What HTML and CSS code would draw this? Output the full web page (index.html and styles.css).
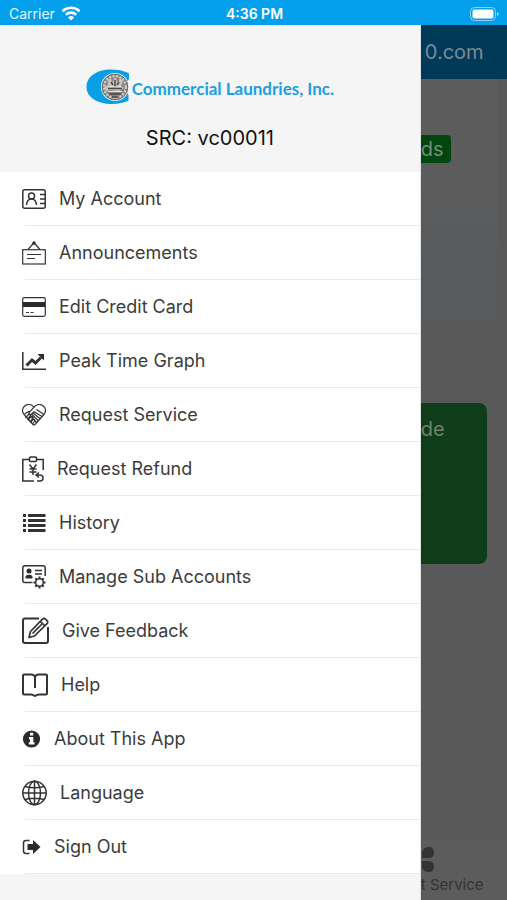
FILE: index.html
```html
<!DOCTYPE html>
<html lang="en">
<head>
    <meta charset="UTF-8">
    <meta name="viewport" content="width=device-width, initial-scale=1.0">
    <title>Commercial Laundries, Inc.</title>
    <link rel="stylesheet" href="styles.css">
</head>
<body>
    <div class="status-bar">
        <div class="carrier">
            <span>Carrier</span>
            <svg width="20" height="15" viewBox="0 0 20 15" fill="none" stroke="#fff" stroke-width="2.6">
                <path d="M1.5 5.2a12.3 12.3 0 0 1 17 0"/>
                <path d="M4.8 8.7a7.6 7.6 0 0 1 10.4 0"/>
                <path d="M10 14.6l-3-3.2a4.4 4.4 0 0 1 6 0z" fill="#fff" stroke="none"/>
            </svg>
        </div>
        <time>4:36 PM</time>
        <svg class="battery" width="30" height="14" viewBox="0 0 30 14">
            <rect x="0.5" y="0.5" width="25" height="13" rx="4" fill="none" stroke="#8fd2f6"/>
            <rect x="2.5" y="2.5" width="21" height="9" rx="2" fill="#fff"/>
            <path d="M27 5c2.4.6 2.4 3.4 0 4z" fill="#8fd2f6"/>
        </svg>
    </div>

    <div class="screen">
        <nav class="drawer">
            <header class="drawer-header">
                <div class="logo">
                    <svg width="44" height="36" viewBox="0 0 44 36">
                        <path d="M43 4.2C37 1.5 31 .5 25 .5 10 .5.5 8 .5 18S11 35 26 35c7 0 12-1.3 16.5-3.5V26L38 18l5-8z" fill="#079fe6"/>
                        <circle cx="29" cy="18" r="14" fill="#f5f5f5"/>
                        <circle cx="29" cy="18" r="13" fill="#8b8583"/>
                        <circle cx="29" cy="18" r="11" fill="none" stroke="#d2cecc" stroke-width="2.5" stroke-dasharray="2 1.5"/>
                        <circle cx="29" cy="18" r="12.8" fill="none" stroke="#6e6867"/>
                        <path d="M22 11l3-2 1 5 3-6 3 6 2-5 3 3-2 5 3 2-5 3-9-1-4 1-2-4 4-2z" fill="#c9c5c3"/>
                        <path d="M22 19.5h14M25 13l2 3M33 13l-2 3M29 11v6M23 25h12M26 28h6" fill="none" stroke="#4b4645" stroke-width="1.5"/>
                        <path d="M22 22.5h14M24 17.5h3M31 17.5h4" stroke="#e6e3e1"/>
                    </svg>
                    <span>Commercial Laundries, Inc.</span>
                </div>
                <p class="src">SRC: vc00011</p>
            </header>

            <ul class="menu">
                <li><a href="#account">
                    <svg width="24" height="20" viewBox="0 0 24 20">
                        <rect x="0.8" y="0.8" width="22.4" height="18.4" rx="2"/>
                        <circle cx="9.5" cy="7" r="3"/>
                        <path d="M4.5 16c.3-3.700 1.800-6 5-6s4.700 2.300 5 6M18 5.500h5.500M18 10h5.500M18 14.500h5.500"/>
                    </svg>
                    <span>My Account</span>
                </a></li>
                <li><a href="#announcements">
                    <svg class="thin" width="24" height="24" viewBox="0 0 24 24">
                        <rect x="0.7" y="8.7" width="22.6" height="14.3"/>
                        <path d="M6 8.5l5.3-6M18 8.500l-5.300-6M5 13.500h14M5 17.500h8M16 13.500h3"/>
                        <circle class="solid" cx="12" cy="2" r="1.7"/>
                    </svg>
                    <span>Announcements</span>
                </a></li>
                <li><a href="#card">
                    <svg class="thin" width="24" height="20" viewBox="0 0 24 20">
                        <rect x="0.7" y="0.7" width="22.6" height="18.6" rx="1.5"/>
                        <path class="solid" d="M1 5h22v5H1z"/>
                        <path d="M4 15.5h3M8.500 15.500h3"/>
                    </svg>
                    <span>Edit Credit Card</span>
                </a></li>
                <li><a href="#graph">
                    <svg width="24" height="18" viewBox="0 0 24 18">
                        <path d="M0.8 0v17.2H24"/>
                        <path d="M4.5 13.5l5.500-5.500 3.500 3L19 5.500" stroke-width="3"/>
                        <path class="solid" d="M15.5 2H22v6.500z"/>
                    </svg>
                    <span>Peak Time Graph</span>
                </a></li>
                <li><a href="#service">
                    <svg class="thin" width="24" height="22" viewBox="0 0 24 22">
                        <path d="M12 3.2C9.5-.2 5-.2 2.5 2.2 0 5 .2 8.5 2.5 11l8.500 9.500q1 1 2 0l8.500-9.500c2.300-2.500 2.500-6 0-8.800C19-.2 14.500-.2 12 3.200z"/>
                        <path d="M12 3.200L7.200 8.500c-.8 2 1.200 2.800 2.500 1.500L12 7.800l8.500 5M14.500 5.500l7.500 5M2.500 10l5-3M11 9l7.500 6M10 10.500l6.500 6.500M9 12.500l5.500 6"/>
                        <path d="M3.500 14l3-3.500c1.500-1 2.500.5 1.500 1.700l-2.500 3.500M6 16.500l3-4c1.500-.8 2.600.5 1.600 1.800L8 18M8.500 19l2.500-3.500c1.500-.5 2.200.8 1.400 2L10.500 20"/>
                    </svg>
                    <span>Request Service</span>
                </a></li>
                <li><a href="#refund">
                    <svg width="22" height="26" viewBox="0 0 22 26">
                        <path d="M7 3.500H.8V25H12M15 3.500h6.200V14"/>
                        <rect x="7.5" y="1" width="7" height="4.500" rx="1"/>
                        <path d="M7.500 8.500L11 13l3.500-4.500M11 13v6M7.500 13h7M7.500 16h7"/>
                        <path d="M17 16.500L14 19l3 2.500M14 19h4c4 0 4 6 0 6h-3"/>
                    </svg>
                    <span>Request Refund</span>
                </a></li>
                <li><a href="#history">
                    <svg width="24" height="20" viewBox="0 0 24 20">
                        <path d="M1 2.500h3M1 7.500h3M1 12.500h3M1 17.500h3M6 2.500h17.500M6 7.500h17.500M6 12.500h17.500M6 17.500h17.500" stroke-width="3"/>
                    </svg>
                    <span>History</span>
                </a></li>
                <li><a href="#sub-accounts">
                    <svg width="24" height="24" viewBox="0 0 24 24">
                        <path d="M10.500 17.500H3Q.8 17.500.8 15.300V3Q.8.8 3 .8h18q2.200 0 2.200 2.200v8"/>
                        <circle class="solid" cx="7" cy="6" r="2.500"/>
                        <path class="solid" d="M3.500 13.500V12c0-3 7-3 7 0v1.500z"/>
                        <path d="M13 5.500h7M13 9h7"/>
                        <circle cx="17.5" cy="17.5" r="3.800"/>
                        <path d="M17.500 11.500v2M17.500 21.500v2M11.500 17.500h2M21.500 17.500h2M13.300 13.300l1.400 1.400M20.300 20.300l1.400 1.400M13.300 21.700l1.400-1.400M20.300 14.700l1.400-1.400" stroke-width="2"/>
                    </svg>
                    <span>Manage Sub Accounts</span>
                </a></li>
                <li><a href="#feedback">
                    <svg class="bold" width="27" height="27" viewBox="0 0 27 27">
                        <path d="M17 1.500H3Q1 1.500 1 3.500V24q0 2 2 2h21q2 0 2-2V10"/>
                        <path d="M7 20.500l1.500-6L20.500 2.200q1.500-1.500 3 0L25 3.700q1.500 1.500 0 3L12.500 19zM18.500 4.500L23 9M10.500 16.500l9.500-9.500" stroke-width="1.7"/>
                    </svg>
                    <span>Give Feedback</span>
                </a></li>
                <li><a href="#help">
                    <svg class="bold" width="26" height="24" viewBox="0 0 26 24">
                        <path d="M13 15V3.500Q11.500 1.500 9.500 1.500H2q-1 0-1 1v18q0 1 1 1h7q2 0 3 1.200h2q1-1.200 3-1.200h7q1 0 1-1v-18q0-1-1-1h-7.500Q14.500 1.500 13 3.500"/>
                    </svg>
                    <span>Help</span>
                </a></li>
                <li><a href="#about">
                    <svg width="19" height="18" viewBox="0 0 19 18">
                        <circle class="solid" cx="9.5" cy="9" r="8.600"/>
                        <path d="M8 2.800h3.200v2.700H8zM7 7h4.300v5.200h1.200v2.200H6.800v-2.200H8V9.200H7z" fill="#fff" stroke="none"/>
                    </svg>
                    <span>About This App</span>
                </a></li>
                <li><a href="#language">
                    <svg width="25" height="26" viewBox="0 0 25 26">
                        <circle cx="12.5" cy="13" r="11.700"/>
                        <ellipse cx="12.5" cy="13" rx="6" ry="11.700"/>
                        <path d="M12.500 1.300v23.400M.8 13h23.400M3 6.500q9.500 2.500 19 0M3 19.500q9.500-2.500 19 0"/>
                    </svg>
                    <span>Language</span>
                </a></li>
                <li><a href="#sign-out">
                    <svg width="19" height="16" viewBox="0 0 19 16">
                        <path d="M7.500 1.500H4Q1.500 1.500 1.500 4v8q0 2.500 2.500 2.500h3.500"/>
                        <path class="solid" d="M5.500 5h5.500V1L18.500 8 11 15v-4H5.500z"/>
                    </svg>
                    <span>Sign Out</span>
                </a></li>
            </ul>
        </nav>

        <!-- dimmed page behind the drawer -->
        <main class="page">
            <div class="page-bar">0.com</div>
            <section class="balance">
                <button class="add-funds" type="button">ds</button>
            </section>
            <button class="code-card" type="button">de</button>
            <a class="tab" href="#service">
                <svg width="14" height="28" viewBox="0 0 14 28" fill="#333">
                    <path d="M1 12V6q2-5 6.500-5Q13 1 13 6.500T7.500 12zM1 15h6.500q5.500 0 5.500 5.500T7.500 26Q3 26 1 22z"/>
                </svg>
                <span>t Service</span>
            </a>
        </main>
    </div>
</body>
</html>
```

FILE: styles.css
```css
* {
    margin: 0;
    padding: 0;
    box-sizing: border-box;
}

body {
    font-family: Inter, 'Liberation Sans', sans-serif;
    color: #3c3c3c;
    background: #f5f5f5;
    min-height: 100vh;
    display: flex;
    flex-direction: column;
}

a {
    color: inherit;
    text-decoration: none;
}

button {
    font: inherit;
    border: none;
}

.status-bar {
    display: grid;
    grid-template-columns: 1fr auto 1fr;
    align-items: center;
    height: 25px;
    padding: 2px 7px 0 9px;
    background: #039fea;
    color: #fff;
    font-size: 14px;
}

.status-bar time {
    font-weight: 600;
}

.carrier {
    display: flex;
    align-items: center;
    gap: 6px;
    color: #e4f5fe;
}

.battery {
    justify-self: end;
}

.screen {
    flex: 1;
    display: grid;
    grid-template-columns: 83% 17%;
}

.drawer {
    background: #f5f5f5;
    border-right: 1px solid #e4e4e4;
}

.drawer-header {
    display: flex;
    flex-direction: column;
    align-items: center;
    gap: 19px;
    height: 147px;
    padding-top: 42px;
}

.logo {
    display: flex;
    align-items: center;
    gap: 2px;
    color: #1ba0e0;
    font-family: Lato, sans-serif;
    font-size: 17px;
    font-weight: bold;
    line-height: 36px;
}

.logo span {
    padding-top: 4px;
}

.src {
    color: #111;
    font-size: 20px;
    line-height: 24px;
}

/* menu */
.menu {
    list-style: none;
    background: #fff;
}

.menu li::after {
    content: "";
    display: block;
    height: 1px;
    margin-left: 25px;
    background: #e9e9e9;
}

.menu a {
    display: flex;
    align-items: center;
    gap: 13px;
    height: 53px;
    padding-left: 22px;
    font-size: 18px;
}

.menu svg {
    fill: none;
    stroke: #333;
    stroke-width: 1.5;
    flex: none;
}

.menu svg.thin {
    stroke-width: 1.2;
}

.menu svg.bold {
    stroke-width: 2;
    stroke-linejoin: round;
}

.menu .solid {
    fill: #2b2b2b;
    stroke: none;
}

/* page behind */
.page {
    display: flex;
    flex-direction: column;
    align-items: flex-start;
    overflow: hidden;
    background: #595959;
    font-size: 20px;
}

.page-bar {
    width: 100%;
    padding-left: 4px;
    background: #003a59;
    color: #7d8b94;
    line-height: 54px;
}

.balance {
    width: 90%;
    height: 241px;
    padding-top: 56px;
    background: linear-gradient(#5c5c5c 45%, #585b5e 75%);
}

.add-funds {
    width: 30px;
    height: 28px;
    background: #00460f;
    color: #758a77;
    border-radius: 0 4px 4px 0;
    text-align: left;
}

.code-card {
    display: flex;
    width: 66px;
    height: 161px;
    margin-top: 83px;
    padding-top: 14px;
    background: #0f3c19;
    color: #71836f;
    border-radius: 0 8px 8px 0;
}

.tab {
    display: flex;
    flex-direction: column;
    align-items: flex-start;
    gap: 1px;
    width: 100%;
    margin-top: auto;
    padding: 6px 0 5px;
    background: #5c5c5c;
    color: #333;
    font-size: 15px;
    line-height: 20px;
    white-space: nowrap;
}
```
